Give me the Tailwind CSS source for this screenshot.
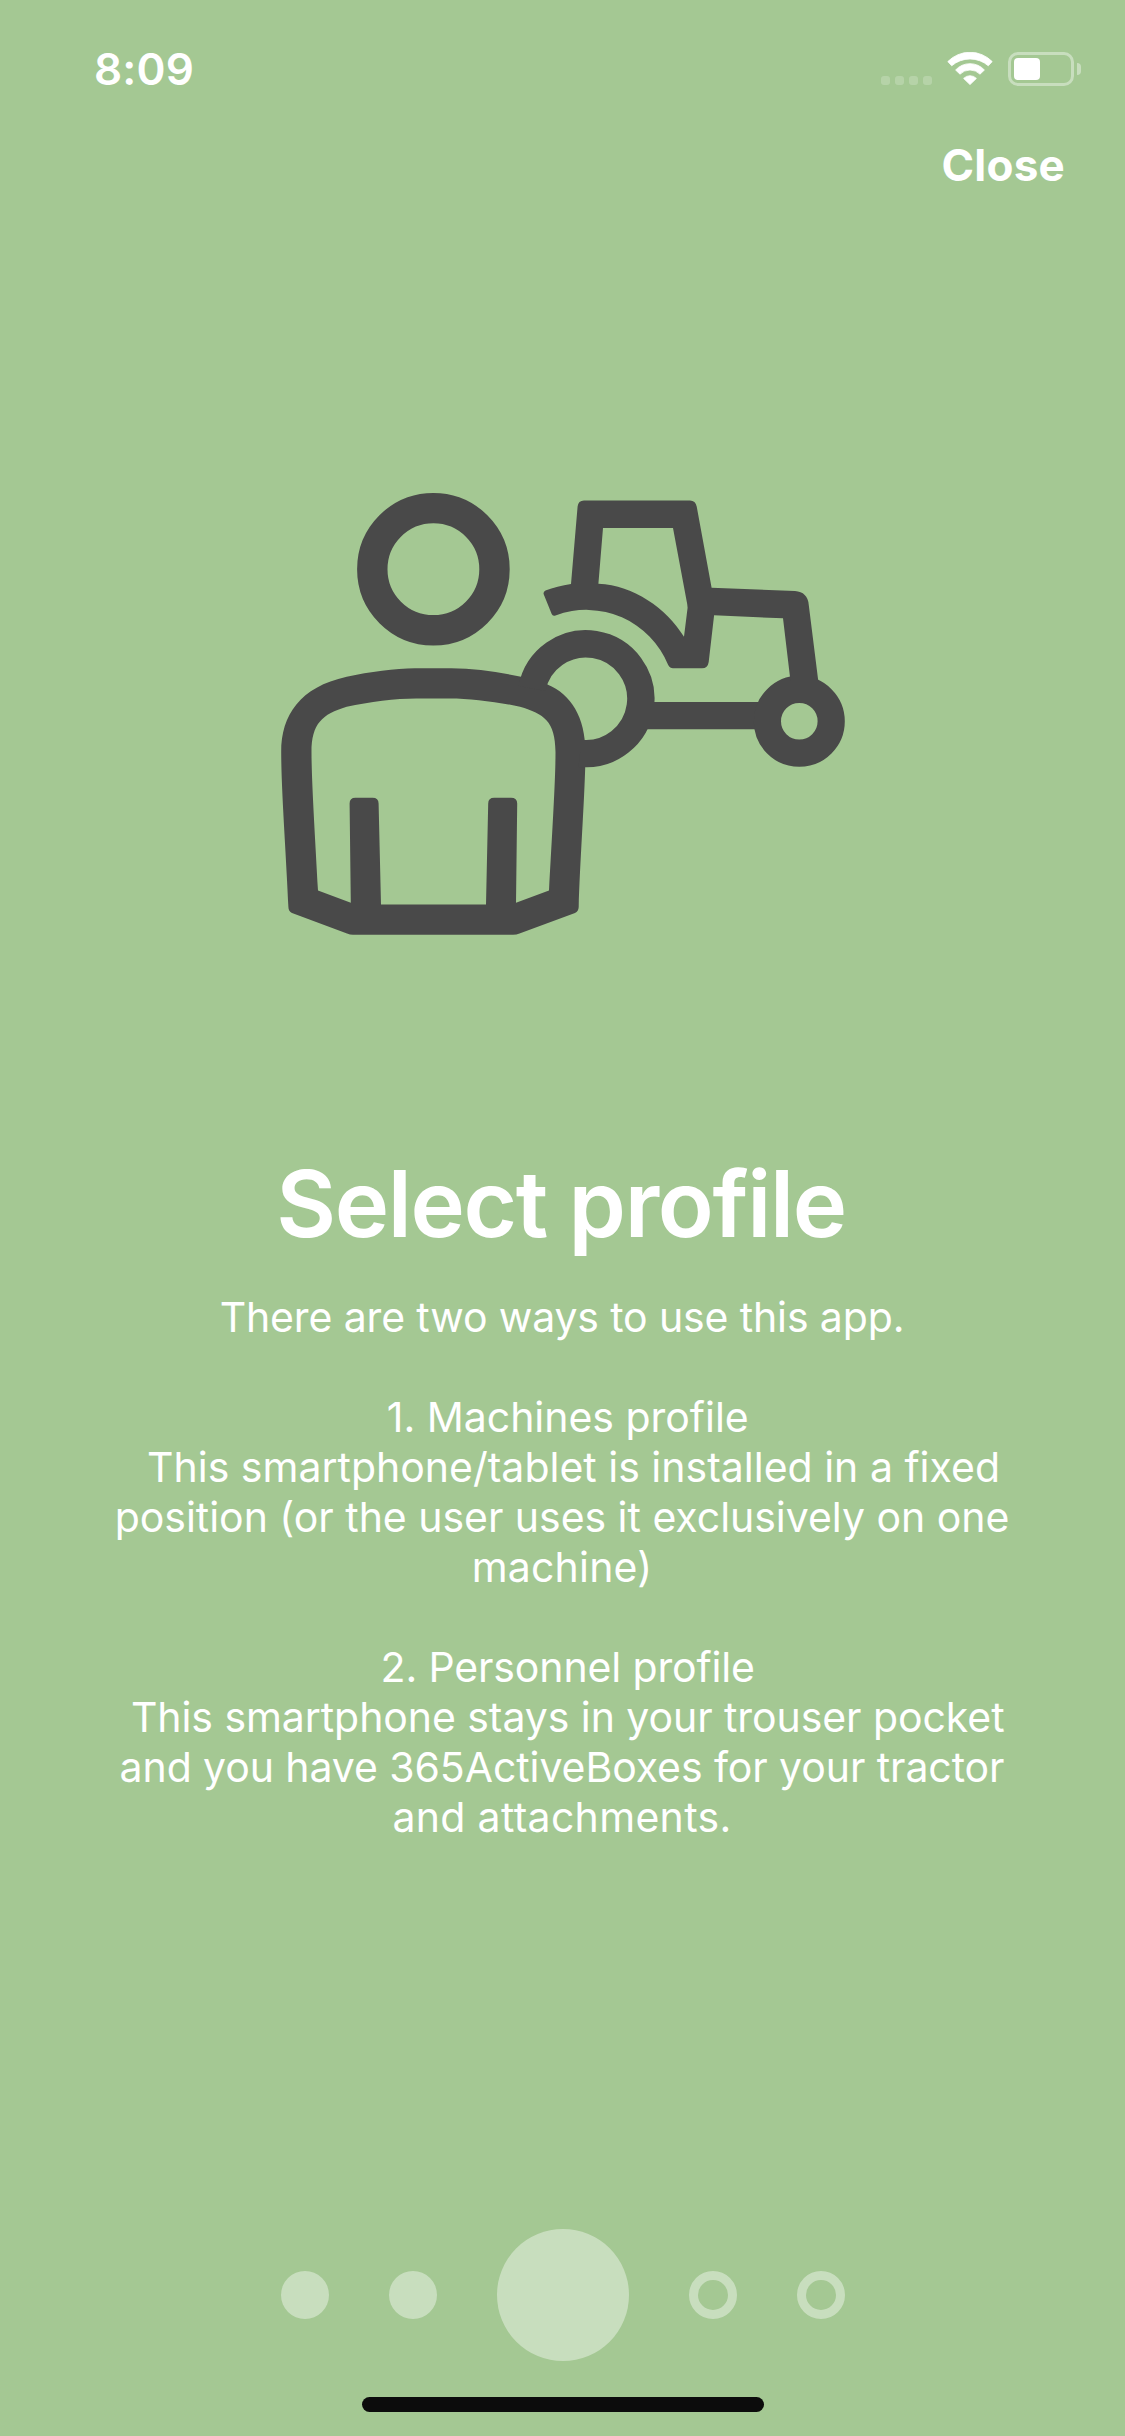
<!DOCTYPE html>
<html lang="en">
<head>
<meta charset="utf-8">
<title>Select profile</title>
<script src="https://cdn.jsdelivr.net/npm/@tailwindcss/browser@4"></script>
</head>
<body class="bg-[#a4c893]">
<div class="flex h-[2436px] w-[1125px] flex-col overflow-hidden bg-[#a4c893] font-['Inter',sans-serif] text-white">

  <!-- Status bar -->
  <header class="flex h-[138px] shrink-0 items-start justify-between pt-[42px] pr-[44px] pl-[94px]">
    <time class="text-[44px] leading-[54px] font-semibold tracking-[0.2px]">8:09</time>
    <div class="flex items-start pt-[10px]">
      <div class="flex gap-[5px] pt-[24px]">
        <span class="size-[9px] rounded-[3px] bg-white/20"></span>
        <span class="size-[9px] rounded-[3px] bg-white/20"></span>
        <span class="size-[9px] rounded-[3px] bg-white/20"></span>
        <span class="size-[9px] rounded-[3px] bg-white/20"></span>
      </div>
      <svg class="ml-[15px] h-[34px] w-[46px]" viewBox="947 52 46 34" fill="#fff" stroke="#fff" stroke-width="0.8" stroke-linejoin="round">
        <path d="M947.8 61.6A31 31 0 0 1 992.2 61.6L988.3 65.8A28 28 0 0 0 951.7 65.8Z"/>
        <path d="M955.6 70A19.5 19.5 0 0 1 984.4 70L980 74.2A14 14 0 0 0 960 74.2Z"/>
        <path d="M963.6 78.4A9 9 0 0 1 976.4 78.4L970 84.6Z"/>
      </svg>
      <div class="ml-[15px] flex items-center gap-[3px]">
        <div class="h-[34px] w-[66px] rounded-[10px] border-3 border-white/40 p-[3px]">
          <div class="h-[22px] w-[26px] rounded-[4px] bg-white"></div>
        </div>
        <div class="h-[12px] w-[4px] rounded-r-full bg-white/40"></div>
      </div>
    </div>
  </header>

  <nav class="flex shrink-0 justify-end pr-[60px]">
    <button class="text-[44px] leading-[54px] font-bold tracking-[0.23px]">Close</button>
  </nav>

  <!-- Person with tractor -->
  <svg class="mt-[288px] ml-[270px] h-[470px] w-[590px] shrink-0" viewBox="270 480 590 470" fill="#494949">
    <circle cx="433.4" cy="569.2" r="61.1" fill="none" stroke="#494949" stroke-width="30.4"/>
    <path fill-rule="evenodd" d="M281.2 752C281.2 715 300 687 346.7 676.7C370 672 395 668.3 415 668.3H451C475 668.3 498 672 521 676.7C535 679.3 541 681 547.4 684.4C571 694 585.3 717 585.5 752C585.3 790 580 860 578.7 907Q578.5 911.5 575 913L519.5 933.6Q516.5 934.8 513 934.8H353Q350 934.8 347 933.6L292 913Q288.5 911.5 288.4 907C286.5 860 281.2 790 281.2 752Z
      M311.5 752C311.5 779 315 835 318 890.6L350.8 902.8L349.6 803.5Q349.6 797.8 355.5 797.8H372.5Q378.6 797.8 378.6 803.5L381 904.5H486L488.2 803.5Q488.2 797.8 494.2 797.8H511Q517.2 797.8 517.2 803.5L516 902.8L549 890.6C552 835 555.6 779 555.5 752C555.3 721 544 714 520 706.7C498 702 470 698.5 450 698.5H416C396 698.5 369 702 346.7 706.7C322 714 311.5 724 311.5 752Z"/>
    <path d="M532 688.5A54.9 54.9 0 1 1 580 753.3" fill="none" stroke="#494949" stroke-width="27.4"/>
    <path d="M640 702H765V729.2H640Z"/>
    <circle cx="799.3" cy="721.3" r="31.9" fill="none" stroke="#494949" stroke-width="27.2"/>
    <path fill-rule="evenodd" d="M571 584L577.6 506.5Q578.2 500.4 584 500.4H690Q695.5 500.4 696.7 506.5L711.6 587.7L795 591Q807.5 592 808.7 604.5L818.4 682H790.6L783 618.3L714.1 615.3L708.7 662Q707.8 668.3 702 668.3H673Q670 668.3 668.2 665A88.4 88.4 0 0 0 555.5 615.4Q552.8 616.6 551.7 614L543.8 594.5Q542.8 592 545.5 590.6Q557 586 571 584Z
      M603 528L598.4 583.7C634 585.5 666 608 684 636.7L687.6 607.7L687.2 604L673 528Z"/>
  </svg>

  <!-- Copy -->
  <main class="mt-[198px] shrink-0 text-center">
    <h1 class="pr-[3px] text-[92px] leading-[112px] font-semibold tracking-[-1.365px]">Select profile</h1>
    <div class="mt-[32px] pr-[1px] text-[41px] leading-[50px] [&>p]:whitespace-pre">
      <p class="tracking-[-0.135px]">There are two ways to use this app.</p>
      <p class="mt-[50px] tracking-[-0.025px]"> 1. Machines profile</p>
      <p>  This smartphone/tablet is installed in a fixed</p>
      <p class="tracking-[-0.033px]">position (or the user uses it exclusively on one</p>
      <p class="tracking-[0.186px]">machine)</p>
      <p class="mt-[50px] tracking-[-0.135px]"> 2. Personnel profile</p>
      <p class="tracking-[-0.067px]"> This smartphone stays in your trouser pocket</p>
      <p class="tracking-[-0.085px]">and you have 365ActiveBoxes for your tractor</p>
      <p class="tracking-[0.312px]">and attachments.</p>
    </div>
  </main>

  <!-- Page indicator and home bar -->
  <footer class="mt-auto flex shrink-0 flex-col items-center pb-[24px]">
    <div class="flex items-center gap-[60px]">
      <span class="size-[48px] rounded-full bg-white/40"></span>
      <span class="size-[48px] rounded-full bg-white/40"></span>
      <span class="size-[132px] rounded-full bg-white/40"></span>
      <span class="size-[48px] rounded-full border-9 border-white/40"></span>
      <span class="size-[48px] rounded-full border-9 border-white/40"></span>
    </div>
    <div class="mt-[36px] h-[15px] w-[402px] rounded-full bg-[#0c0c0c]"></div>
  </footer>
</div>
</body>
</html>
